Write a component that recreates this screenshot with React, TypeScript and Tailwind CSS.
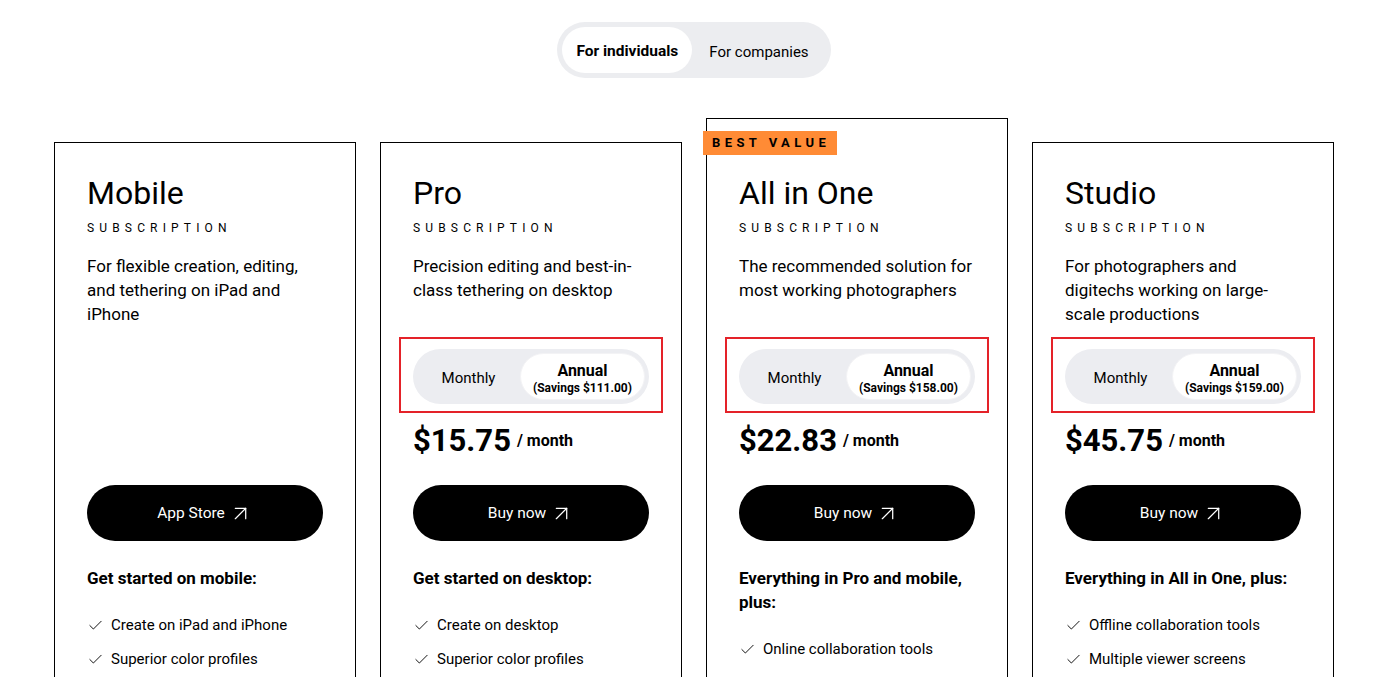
import { ArrowUpRight, Check } from 'lucide-react';

type Plan = {
  name: string;
  desc: string[];
  price?: string;
  savings?: string;
  cta: string;
  heading: string[];
  features: string[];
  best?: boolean;
};

const plans: Plan[] = [
  {
    name: 'Mobile',
    desc: ['For flexible creation, editing,', 'and tethering on iPad and', 'iPhone'],
    cta: 'App Store',
    heading: ['Get started on mobile:'],
    features: ['Create on iPad and iPhone', 'Superior color profiles', 'Wireless tethering', 'Live view'],
  },
  {
    name: 'Pro',
    desc: ['Precision editing and best-in-', 'class tethering on desktop'],
    price: '$15.75',
    savings: '$111.00',
    cta: 'Buy now',
    heading: ['Get started on desktop:'],
    features: ['Create on desktop', 'Superior color profiles', 'Best-in-class tethering', 'Advanced editing tools'],
  },
  {
    name: 'All in One',
    desc: ['The recommended solution for', 'most working photographers'],
    price: '$22.83',
    savings: '$158.00',
    cta: 'Buy now',
    heading: ['Everything in Pro and mobile,', 'plus:'],
    features: ['Online collaboration tools', 'Cloud-based sharing', 'Live review'],
    best: true,
  },
  {
    name: 'Studio',
    desc: ['For photographers and', 'digitechs working on large-', 'scale productions'],
    price: '$45.75',
    savings: '$159.00',
    cta: 'Buy now',
    heading: ['Everything in All in One, plus:'],
    features: ['Offline collaboration tools', 'Multiple viewer screens', 'Advanced workflows', 'Priority support'],
  },
];

function Card({ p }: { p: Plan }) {
  return (
    <div
      className={`relative border border-black bg-white px-[32px] pb-[40px] ${
        p.best ? 'pt-[54px]' : 'mt-[24px] pt-[30px]'
      }`}
    >
      {p.best && (
        <div className="absolute left-[-4px] top-[12px] flex h-[24px] w-[134px] items-center bg-[#ff8b35] pl-[9px] text-[13px] font-bold tracking-[0.34em] text-black">
          BEST VALUE
        </div>
      )}
      <h2 className="text-[32px] leading-[41px] text-black">{p.name}</h2>
      <div className="mt-[6px] text-[12px] leading-[16px] tracking-[0.43em] text-black">SUBSCRIPTION</div>
      <p className="mt-[18px] h-[72px] text-[17px] leading-[24px] text-black">
        {p.desc.map((l, i) => (
          <span key={i} className="block whitespace-nowrap">
            {l}
          </span>
        ))}
      </p>
      {p.price ? (
        <div className="h-[159px] pt-[23px]">
          <div className="relative">
            <div className="pointer-events-none absolute -bottom-[9px] -left-[14px] -right-[14px] -top-[12px] border-2 border-[#e42229]" />
            <div className="flex h-[55px] rounded-full bg-[#ecedf1] p-[4px]">
              <div className="flex flex-1 items-center justify-center pt-[4px] text-[15px] text-black">Monthly</div>
              <div className="flex w-[125px] flex-col items-center justify-center rounded-full border border-[#f3f3f5] bg-white pt-[2px] text-black">
                <span className="text-[16px] font-bold leading-[20px]">Annual</span>
                <span className="text-[12px] font-bold leading-[14px]">(Savings {p.savings})</span>
              </div>
            </div>
          </div>
          <div className="mt-[16px] flex h-[42px] items-center gap-[6px] text-black">
            <span className="text-[31px] font-bold leading-[40px]">{p.price}</span>
            <span className="text-[16px] font-bold">/ month</span>
          </div>
        </div>
      ) : (
        <div className="h-[159px]" />
      )}
      <button className="flex h-[56px] w-full items-center justify-center gap-[3px] rounded-full bg-black pt-[1px] text-[15.5px] text-white">
        {p.cta}
        <ArrowUpRight size={25} strokeWidth={1.2} />
      </button>
      <h3 className="mt-[25px] text-[17px] font-bold leading-[24px] text-black">
        {p.heading.map((l, i) => (
          <span key={i} className="block whitespace-nowrap">
            {l}
          </span>
        ))}
      </h3>
      <ul className="mt-[23px] flex flex-col gap-[10px]">
        {p.features.map((f) => (
          <li key={f} className="flex h-[24px] items-center gap-[7px] text-[15px] text-black">
            <Check size={17} strokeWidth={1.3} className="shrink-0" />
            <span>{f}</span>
          </li>
        ))}
      </ul>
    </div>
  );
}

export default function App() {
  return (
    <div className="min-h-screen bg-white pb-10 font-['Roboto',sans-serif]">
      <div className="ml-[54px] w-[1280px] pt-[22px]">
        <div className="flex justify-center">
          <div className="flex h-[56px] items-center rounded-full bg-[#ecedf0] p-[5px]">
            <div className="flex h-[46px] items-center rounded-full bg-white px-[14px] pt-[4px] text-[15.5px] font-bold text-black">
              For individuals
            </div>
            <div className="flex h-[46px] items-center px-[17px] pt-[4px] text-[15px] text-black">For companies</div>
          </div>
        </div>
        <div className="mt-[40px] grid grid-cols-4 items-start gap-[24px]">
          {plans.map((p) => (
            <Card key={p.name} p={p} />
          ))}
        </div>
      </div>
    </div>
  );
}
